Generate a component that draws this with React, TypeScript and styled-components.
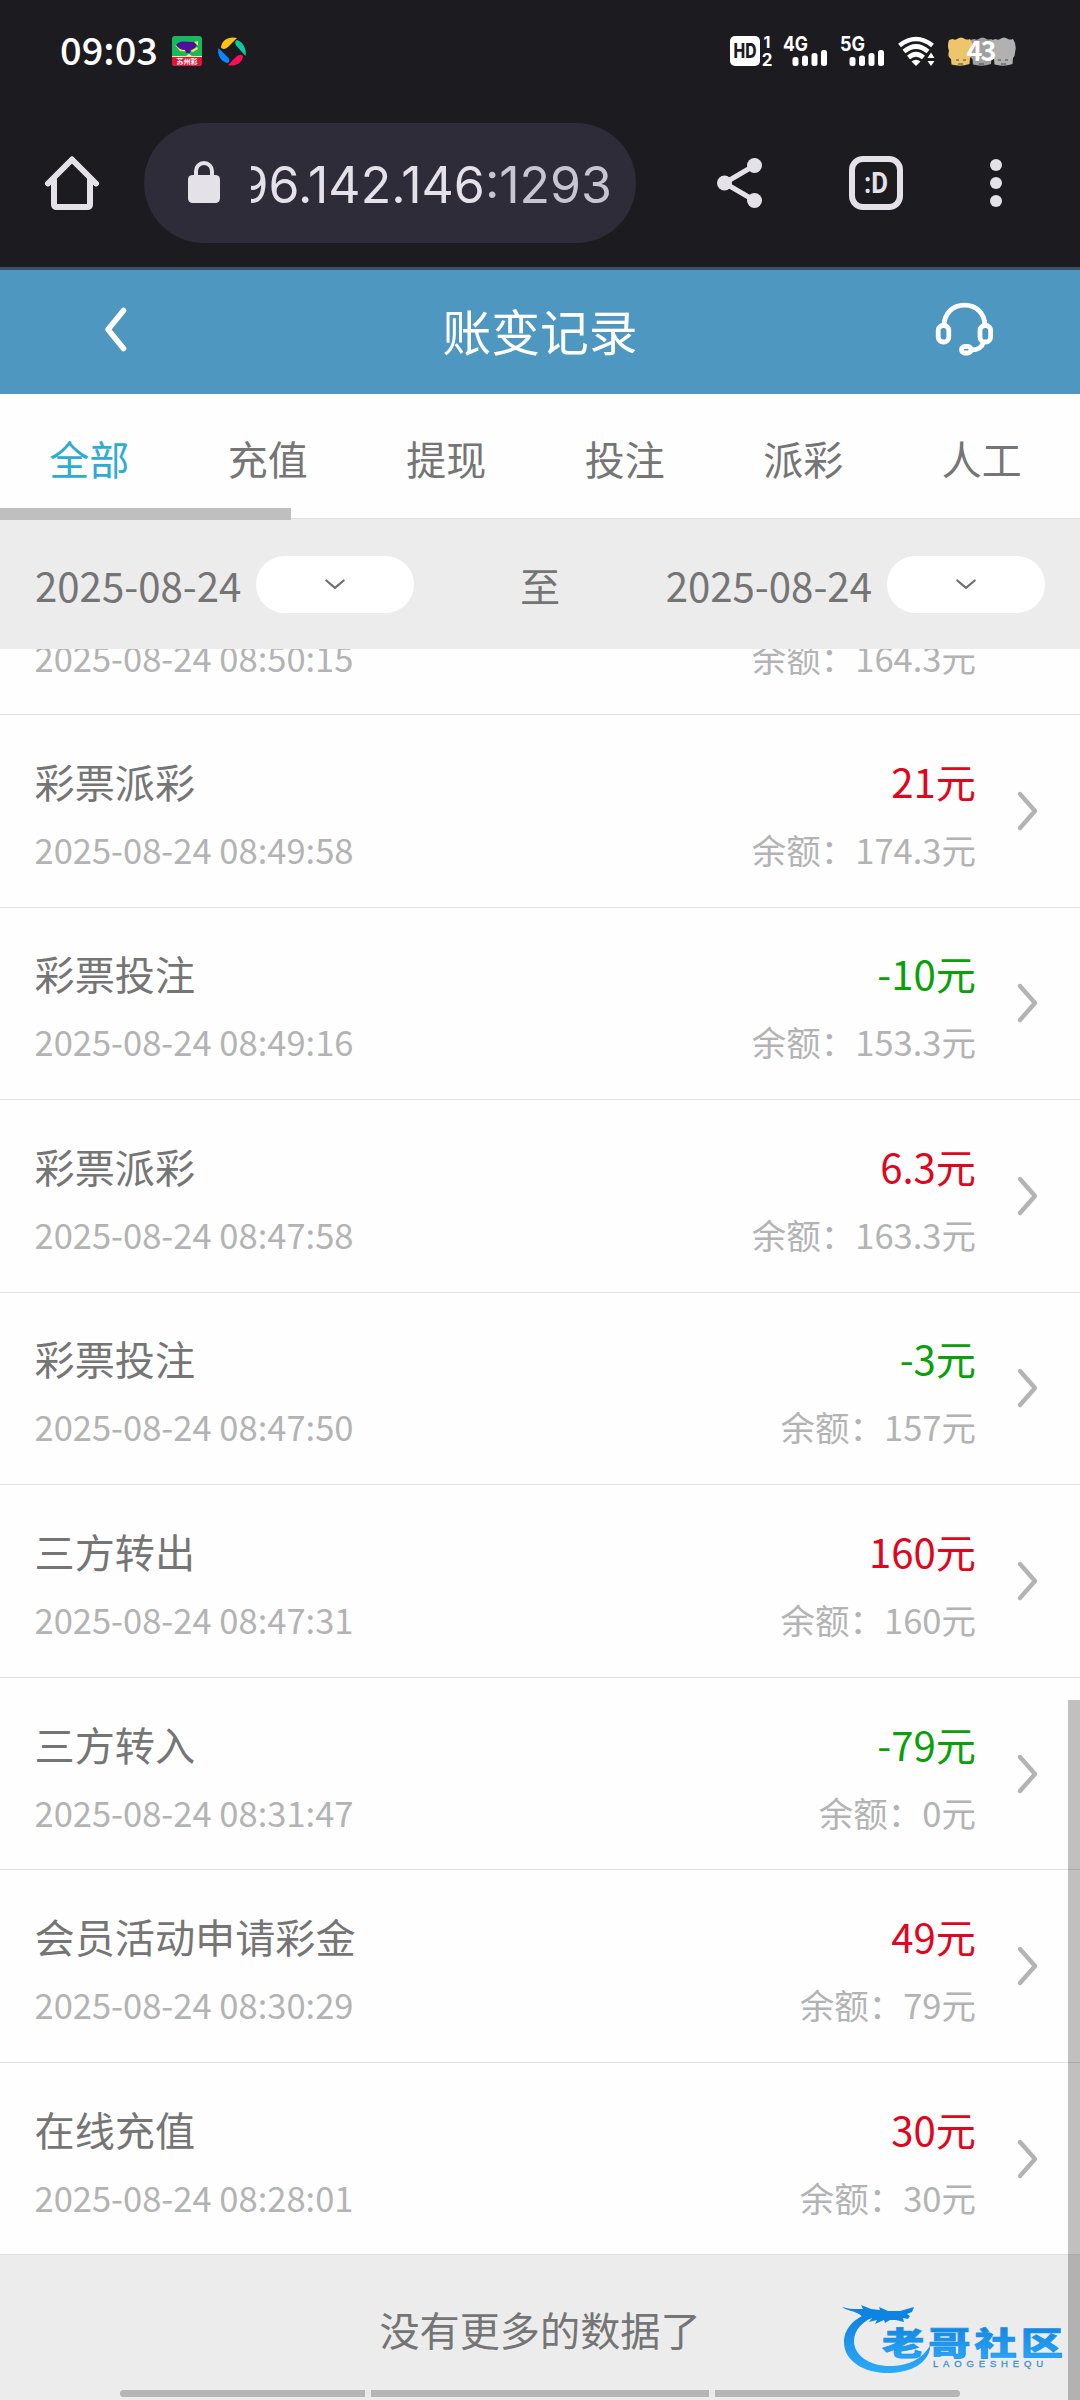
import React from "react";
import styled, { createGlobalStyle } from "styled-components";

const cjk = `"Noto Sans CJK SC", "Noto Sans", sans-serif`;

const GlobalStyle = createGlobalStyle`
  * { box-sizing: border-box; }
  body { margin: 0; background: #fefefe; font-family: ${cjk}; }
  svg { display: block; flex: none; overflow: visible; }
`;

const Screen = styled.main`
  position: relative;
  display: flex;
  flex-direction: column;
  width: 1080px;
  height: 2400px;
  overflow: hidden;
  background: #fefefe;
`;

const StatusBar = styled.div`
  display: flex;
  align-items: center;
  height: 102px;
  padding: 0 65px 0 60px;
  background: #1c1b1f;
`;

const Clock = styled.span`
  width: 112px;
  padding-bottom: 4px;
  font: 500 38px/56px ${cjk};
  color: #fff;
`;

const StatusApps = styled.div`
  display: flex;
  align-items: center;
  gap: 16px;
`;

const StatusIcons = styled.div`
  display: flex;
  align-items: center;
  gap: 13px;
  margin-left: auto;
`;

const BrowserBar = styled.div`
  display: flex;
  align-items: center;
  height: 168px;
  padding: 0 78px 3px 45px;
  background: #1c1b1f;
  border-bottom: 3px solid #3c5366;
  color: #e4e1e9;
`;

const AddressPill = styled.div`
  display: flex;
  align-items: center;
  width: 492px;
  height: 120px;
  margin: 0 81px 0 45px;
  padding: 0 24px 2px 44px;
  border-radius: 60px;
  background: #2d2c38;
`;

const Address = styled.div`
  display: flex;
  justify-content: flex-end;
  width: 361.5px;
  margin-left: 31px;
  overflow: hidden;
  white-space: nowrap;
  font: 400 50px/70px Inter, sans-serif;
  padding-top: 6px;
`;

const Port = styled.span`
  color: #c7c5d2;
`;

const BrowserActions = styled.div`
  display: flex;
  flex: 1;
  align-items: center;
  justify-content: space-between;
`;

const Header = styled.header`
  display: grid;
  grid-template-columns: 240px 1fr 240px;
  align-items: center;
  height: 124px;
  background: #4e97c0;
  color: #fff;
`;

const HeaderButton = styled.div<{ $end?: boolean }>`
  display: flex;
  justify-content: ${(p) => (p.$end ? "flex-end" : "flex-start")};
  padding: ${(p) => (p.$end ? "0 87px 6px 0" : "0 0 5px 105px")};
`;

const Title = styled.h1`
  margin: 0;
  padding-bottom: 4px;
  text-align: center;
  font: 400 48.8px/70px ${cjk};
`;

const Tabs = styled.nav`
  position: relative;
  display: flex;
  height: 125px;
  border-bottom: 1px solid #e0e0e0;
`;

const Tab = styled.span<{ $active?: boolean }>`
  flex: none;
  width: 178.5px;
  text-align: center;
  font-size: 40px;
  line-height: 128px;
  color: ${(p) => (p.$active ? "#2fabd3" : "#757575")};
`;

const TabScroll = styled.div`
  position: absolute;
  left: 0;
  bottom: -2px;
  width: 291px;
  height: 12px;
  background: #bfbfbf;
`;

const Filter = styled.div`
  display: flex;
  align-items: center;
  justify-content: space-between;
  height: 130px;
  padding: 0 35px;
  background: #ececec;
  color: #757575;
  font-size: 40.2px;
  line-height: 60px;
`;

const DateField = styled.div`
  display: flex;
  align-items: center;
  gap: 15px;
`;

const Label = styled.span`
  padding-top: 1px;
`;

const DatePill = styled.div`
  display: flex;
  align-items: center;
  justify-content: center;
  width: 158px;
  height: 57px;
  border-radius: 29px;
  background: #fff;
`;

const ListView = styled.section`
  flex: 1;
  overflow: hidden;
`;

const Row = styled.div`
  display: flex;
  align-items: center;
  height: 192.55px;
  padding: 0 43px 0 34.500px;
  border-bottom: 1px solid #e2e2e2;
`;

const ScrolledRow = styled.div`
  display: flex;
  justify-content: space-between;
  height: 66px;
  padding: 0 104px 0 34.500px;
  overflow: hidden;
  border-bottom: 1px solid #e2e2e2;

  span { margin-top: -22px; }
`;

const Cell = styled.div<{ $end?: boolean }>`
  display: flex;
  flex-direction: column;
  gap: 8px;
  padding-top: 8px;
  ${(p) => p.$end && "margin-left: auto; margin-right: 42px; text-align: right;"}
`;

const Primary = styled.span<{ $color?: string }>`
  font-size: 40.15px;
  line-height: 60px;
  color: ${(p) => p.$color ?? "#757575"};
`;

const Secondary = styled.span`
  font-size: 34.5px;
  line-height: 60px;
  color: #b3b3b3;
`;

const Footer = styled.footer`
  height: 146px;
  background: #ececec;
  color: #757575;
  text-align: center;
  font-size: 40.15px;
  line-height: 148px;
`;

const PageScroll = styled.div`
  position: absolute;
  right: 0;
  top: 1700px;
  bottom: 0;
  width: 12px;
  background: rgba(0, 0, 0, 0.245);
`;

const GestureBar = styled.div`
  position: absolute;
  left: 120px;
  bottom: 3px;
  display: grid;
  grid-template-columns: 245px 338px 245px;
  gap: 6px;
  height: 7px;
`;

const Segment = styled.span<{ $radius?: string }>`
  background: #b5b5b5;
  border-radius: ${(p) => p.$radius ?? "0"};
`;

const Watermark = styled.div`
  position: absolute;
  left: 840px;
  top: 2298px;
`;

const LotteryIcon = () => (
  <svg width="30" height="30" viewBox="0 0 30 30">
    <rect width="30" height="30" rx="3" fill="#18b85f" />
    <path d="M0 20h30v7a3 3 0 0 1-3 3H3a3 3 0 0 1-3-3z" fill="#e3123c" />
    <path d="M0 20h14l3-2 3 2h10v1H0z" fill="#f3ec9c" />
    <path d="m3 9 5 6 6 .5L12 12zM22 6l4-1v4l-2 1zM18 15l7-4 1 2-5 3z" fill="#f0e84b" />
    <path d="M4 9q3-4 8-3.500l10 .5 3 3q-2 4-6 5l-1 3h-4l-1-3q-6 0-9-5z" fill="#4b119c" />
    <text x="15" y="28" textAnchor="middle" fontSize="7" fontWeight="700" fontFamily={cjk} fill="#fff">苏州彩</text>
  </svg>
);

const PinwheelIcon = () => (
  <svg width="28" height="29" viewBox="0 0 28 29">
    <path d="M3 10C4 3 11-1 19 1L10 10C7 13 3 12 3 10z" fill="#ffc20e" />
    <path d="M19 3c6 2 10 9 8.500 16l-8-9c-3-3-3-6-.5-7z" fill="#0fcb9b" />
    <path d="M25 20c-2 7-9 10-15 8l8-8c3-3 7-3 7 0z" fill="#fb0f56" />
    <path d="M9 26C2 24-1 17 .5 11l9 9c3 3 2 6-.5 6z" fill="#0b86ff" />
  </svg>
);

const HdIcon = () => (
  <svg width="41" height="30" viewBox="0 0 41 30">
    <rect width="30" height="30" rx="5" fill="#fff" />
    <text x="3.500" y="22" textLength="23" lengthAdjust="spacingAndGlyphs" fontSize="19.500" fontWeight="800" fontFamily="Inter, sans-serif" fill="#1c1b1f">HD</text>
    <text x="37" y="12" textAnchor="middle" fontSize="16" fontWeight="700" fontFamily="Inter, sans-serif" fill="#fff">1</text>
    <text x="37" y="29.500" textAnchor="middle" fontSize="17" fontWeight="700" fontFamily="Inter, sans-serif" fill="#fff">2</text>
  </svg>
);

const SignalIcon = ({ label }: { label: string }) => (
  <svg width="44" height="30" viewBox="0 0 44 30">
    <text x="-1" y="15" textLength="25" lengthAdjust="spacingAndGlyphs" fontSize="20.500" fontWeight="700" fontFamily="Inter, sans-serif" fill="#fff">{label}</text>
    <g fill="#fff">
      <rect x="8.500" y="21" width="6" height="9" rx="2.500" />
      <rect x="18" y="19.500" width="6" height="10.500" rx="2.500" />
      <rect x="27.500" y="17" width="6" height="13" rx="2.500" />
      <rect x="37" y="14" width="6" height="16" rx="2.500" />
    </g>
  </svg>
);

const WifiIcon = () => (
  <svg width="37" height="30" viewBox="0 0 37 30">
    <g fill="none" stroke="#fff" strokeWidth="4.600">
      <path d="M1.500 9.500Q18-3.500 34.500 9.500" />
      <path d="M6 15.500Q18 5.500 30 15.500" />
      <path d="M10.500 21.500Q18 15 25.500 21.500" />
    </g>
    <path d="M13.500 25.500q4.500-3.500 9 0L18 30z" fill="#fff" />
    <path d="m33 16.500 3.500 5.500h-7zM33 30l3.500-5h-7z" fill="#fff" />
  </svg>
);

const BatteryIcon = () => (
  <svg width="67" height="29" viewBox="0 0 67 29">
    {[43, 21.5, 0].map((x) => (
      <path
        key={x}
        transform={`translate(${x} 0)`}
        d="M1 3 4.500 2q3 1.500 4.500 0 4-3 8 0 2 1 5 0l2 4q1.500 5 0 10 0 3-2 5l-.5 6q-9 3-18 .5L3 22q-4-3-2-8-2-5 0-11z"
        fill={x === 0 ? "#edc66b" : x === 43 ? "#b1b1b1" : "#a0a0a0"}
      />
    ))}
    <path d="M8 23h3m4 0h3M29 23h3m4 0h3M50 23h3m4 0h3M10 27h5M31 27h5M53 27h5" stroke="#4a4842" strokeWidth="1" />
    <text x="18.500" y="24" textLength="30" lengthAdjust="spacing" fontSize="27" fontWeight="700" fontFamily={cjk} fill="#fff">43</text>
  </svg>
);

const HomeIcon = () => (
  <svg width="54" height="54" viewBox="0 0 54 54" fill="none" stroke="#e4e1e9" strokeWidth="6" strokeLinecap="round" strokeLinejoin="round">
    <path d="M3 27.500 27 3.500l24 24" />
    <path d="M9 24v24q0 3 3 3h30q3 0 3-3V24" />
  </svg>
);

const LockIcon = () => (
  <svg width="32" height="42" viewBox="0 0 32 42">
    <rect y="14" width="32" height="28" rx="4.500" fill="#e4e1e9" />
    <path d="M8 16v-6a8 8 0 0 1 16 0v6" fill="none" stroke="#e4e1e9" strokeWidth="4" />
  </svg>
);

const ShareIcon = () => (
  <svg width="45" height="50" viewBox="0 0 45 50" fill="#e4e1e9">
    <path d="M37.500 7.500 7.500 25l30 17.500" fill="none" stroke="#e4e1e9" strokeWidth="5" />
    <circle cx="37.500" cy="7.500" r="7.500" />
    <circle cx="7.500" cy="25" r="7.500" />
    <circle cx="37.500" cy="42.500" r="7.500" />
  </svg>
);

const TabsIcon = () => (
  <svg width="54" height="54" viewBox="0 0 54 54">
    <rect x="3" y="3" width="48" height="48" rx="11" fill="none" stroke="#e4e1e9" strokeWidth="6" />
    <text x="15" y="37" textLength="24" lengthAdjust="spacingAndGlyphs" fontSize="30" fontWeight="700" fontFamily="Roboto, sans-serif" fill="#e4e1e9">:D</text>
  </svg>
);

const MoreIcon = () => (
  <svg width="12" height="48" viewBox="0 0 12 48" fill="#e4e1e9">
    <circle cx="6" cy="6" r="6" />
    <circle cx="6" cy="24" r="6" />
    <circle cx="6" cy="42" r="6" />
  </svg>
);

const BackIcon = () => (
  <svg width="21" height="43" viewBox="0 0 21 43">
    <path d="M18.500 2.500 3 21.500l15.500 19" fill="none" stroke="#fff" strokeWidth="5.600" strokeLinecap="round" strokeLinejoin="round" />
  </svg>
);

const HeadsetIcon = () => (
  <svg width="57" height="53" viewBox="0 0 57 53" fill="none" stroke="#fff" strokeWidth="4.800">
    <path d="M8 23C8 10 17 2.200 28.500 2.200S49 10 49 23" />
    <rect x="2.200" y="22.500" width="10.600" height="16.500" rx="5" />
    <rect x="44" y="22.500" width="10.600" height="16.500" rx="5" />
    <rect x="25.500" y="43.500" width="9.500" height="6.500" rx="3.200" />
    <path d="M35 47c7 0 11-2 12.500-8" />
  </svg>
);

const DownIcon = () => (
  <svg width="20" height="11" viewBox="0 0 20 11">
    <path d="m1.300 1.500 8.700 7.300 8.700-7.300" fill="none" stroke="#6f6f6f" strokeWidth="2.200" strokeLinecap="round" strokeLinejoin="round" />
  </svg>
);

const NextIcon = () => (
  <svg width="19" height="38" viewBox="0 0 19 38">
    <path d="m2 2 15 17L2 36" fill="none" stroke="#b3b3b3" strokeWidth="4.400" strokeLinecap="round" strokeLinejoin="round" />
  </svg>
);

const CommunityLogo = () => (
  <svg width="224" height="78" viewBox="0 0 224 78">
    <defs>
      <linearGradient id="logoBlue" x1="0" y1="0" x2="0" y2="1">
        <stop offset="0" stopColor="#0d7fdc" />
        <stop offset="1" stopColor="#2cabfa" />
      </linearGradient>
    </defs>
    <path d="M38 14C16 16 4 30 4 44c0 20 22 32 47 31 21-1 36-10 39-24v-3C81 62 68 67 53 68 31 69 14 58 14 43c0-11 8-20 24-26z" fill="url(#logoBlue)" />
    <path d="M2 9c8 2.500 14 2 21 2L21 7l10 4 9 1-1-3 9 4 12 0 14-4-2 5-5 2 3 2-2 3-5-1 1 4-8-2-6 0-5 3-1-3-9 4 2-4-8 2 3-4-10 3C25 14 9 14 2 9z" fill="#0e84e2" />
    <text transform="translate(42 56.500) scale(1.340 1)" x="0" y="0" textLength="135" lengthAdjust="spacing" fontSize="31.500" fontWeight="900" fontFamily={cjk} fill="url(#logoBlue)" stroke="#1c90ea" strokeWidth=".7">老哥社区</text>
    <text x="93" y="68.500" textLength="110" lengthAdjust="spacing" fontSize="9.500" fontFamily="Liberation Sans, sans-serif" fill="#3991cf" stroke="#3991cf" strokeWidth=".3">LAOGESHEQU</text>
  </svg>
);

const tabs = ["全部", "充值", "提现", "投注", "派彩", "人工"];

const records = [
  { name: "彩票派彩", time: "08:49:58", amount: "21", balance: "174.3" },
  { name: "彩票投注", time: "08:49:16", amount: "-10", balance: "153.3" },
  { name: "彩票派彩", time: "08:47:58", amount: "6.3", balance: "163.3" },
  { name: "彩票投注", time: "08:47:50", amount: "-3", balance: "157" },
  { name: "三方转出", time: "08:47:31", amount: "160", balance: "160" },
  { name: "三方转入", time: "08:31:47", amount: "-79", balance: "0" },
  { name: "会员活动申请彩金", time: "08:30:29", amount: "49", balance: "79" },
  { name: "在线充值", time: "08:28:01", amount: "30", balance: "30" },
];

const DateSelect = () => (
  <DateField>
    <Label>2025-08-24</Label>
    <DatePill><DownIcon /></DatePill>
  </DateField>
);

export default function App() {
  return (
    <Screen>
      <GlobalStyle />
      <StatusBar>
        <Clock>09:03</Clock>
        <StatusApps>
          <LotteryIcon />
          <PinwheelIcon />
        </StatusApps>
        <StatusIcons>
          <HdIcon />
          <SignalIcon label="4G" />
          <SignalIcon label="5G" />
          <WifiIcon />
          <BatteryIcon />
        </StatusIcons>
      </StatusBar>
      <BrowserBar>
        <HomeIcon />
        <AddressPill>
          <LockIcon />
          <Address>
            <span>96.142.146</span>
            <Port>:1293</Port>
          </Address>
        </AddressPill>
        <BrowserActions>
          <ShareIcon />
          <TabsIcon />
          <MoreIcon />
        </BrowserActions>
      </BrowserBar>
      <Header>
        <HeaderButton><BackIcon /></HeaderButton>
        <Title>账变记录</Title>
        <HeaderButton $end><HeadsetIcon /></HeaderButton>
      </Header>
      <Tabs>
        {tabs.map((tab, i) => (
          <Tab key={tab} $active={i === 0}>{tab}</Tab>
        ))}
        <TabScroll />
      </Tabs>
      <Filter>
        <DateSelect />
        <Label>至</Label>
        <DateSelect />
      </Filter>
      <ListView>
        <ScrolledRow>
          <Secondary>2025-08-24 08:50:15</Secondary>
          <Secondary>余额：164.3元</Secondary>
        </ScrolledRow>
        {records.map((r) => (
          <Row key={r.time}>
            <Cell>
              <Primary>{r.name}</Primary>
              <Secondary>2025-08-24 {r.time}</Secondary>
            </Cell>
            <Cell $end>
              <Primary $color={r.amount.startsWith("-") ? "#09a009" : "#df0720"}>{r.amount}元</Primary>
              <Secondary>余额：{r.balance}元</Secondary>
            </Cell>
            <NextIcon />
          </Row>
        ))}
        <Footer>没有更多的数据了</Footer>
      </ListView>
      <PageScroll />
      <GestureBar>
        <Segment $radius="4px 0 0 4px" />
        <Segment />
        <Segment $radius="0 4px 4px 0" />
      </GestureBar>
      <Watermark><CommunityLogo /></Watermark>
    </Screen>
  );
}
